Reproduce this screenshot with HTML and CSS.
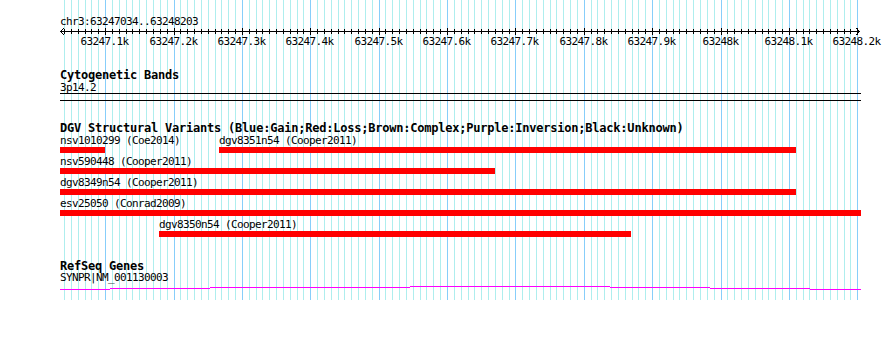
FILE: index.html
```html
<!DOCTYPE html>
<html lang="en">
<head>
    <meta charset="UTF-8">
    <meta name="viewport" content="width=device-width, initial-scale=1.0">
    <title>chr3:63247034..63248203</title>
    <link rel="stylesheet" href="styles.css">
</head>
<body>
    <div class="panel">
        <!-- grid: one line every 10 bp, darker every 100 bp -->
        <svg class="grid" width="890" height="300">
            <defs>
                <path id="bp10" d="M64.5 0V300M71.5 0V300M78.5 0V300M85.5 0V300M91.5 0V300M98.5 0V300M105.5 0V300M112.5 0V300M119.5 0V300M126.5 0V300M132.5 0V300M139.5 0V300M146.5 0V300M153.5 0V300M160.5 0V300M167.5 0V300M174.5 0V300M180.5 0V300M187.5 0V300M194.5 0V300M201.5 0V300M208.5 0V300M215.5 0V300M221.5 0V300M228.5 0V300M235.5 0V300M242.5 0V300M249.5 0V300M256.5 0V300M262.5 0V300M269.5 0V300M276.5 0V300M283.5 0V300M290.5 0V300M297.5 0V300M303.5 0V300M310.5 0V300M317.5 0V300M324.5 0V300M331.5 0V300M338.5 0V300M344.5 0V300M351.5 0V300M358.5 0V300M365.5 0V300M372.5 0V300M379.5 0V300M385.5 0V300M392.5 0V300M399.5 0V300M406.5 0V300M413.5 0V300M420.5 0V300M426.5 0V300M433.5 0V300M440.5 0V300M447.5 0V300M454.5 0V300M461.5 0V300M468.5 0V300M474.5 0V300M481.5 0V300M488.5 0V300M495.5 0V300M502.5 0V300M509.5 0V300M515.5 0V300M522.5 0V300M529.5 0V300M536.5 0V300M543.5 0V300M550.5 0V300M556.5 0V300M563.5 0V300M570.5 0V300M577.5 0V300M584.5 0V300M591.5 0V300M597.5 0V300M604.5 0V300M611.5 0V300M618.5 0V300M625.5 0V300M632.5 0V300M638.5 0V300M645.5 0V300M652.5 0V300M659.5 0V300M666.5 0V300M673.5 0V300M679.5 0V300M686.5 0V300M693.5 0V300M700.5 0V300M707.5 0V300M714.5 0V300M721.5 0V300M727.5 0V300M734.5 0V300M741.5 0V300M748.5 0V300M755.5 0V300M762.5 0V300M768.5 0V300M775.5 0V300M782.5 0V300M789.5 0V300M796.5 0V300M803.5 0V300M809.5 0V300M816.5 0V300M823.5 0V300M830.5 0V300M837.5 0V300M844.5 0V300M850.5 0V300M857.5 0V300"/>
                <path id="bp100" d="M105.5 0V300M174.5 0V300M242.5 0V300M310.5 0V300M379.5 0V300M447.5 0V300M515.5 0V300M584.5 0V300M652.5 0V300M721.5 0V300M789.5 0V300M857.5 0V300"/>
            </defs>
            <use href="#bp10" class="grid-minor"/>
            <use href="#bp100" class="grid-major"/>
        </svg>

        <div class="content">
            <svg class="ruler" width="890" height="50">
                <defs>
                    <clipPath id="minor-ticks"><rect x="0" y="29" width="890" height="5"/></clipPath>
                    <clipPath id="major-ticks"><rect x="0" y="28" width="890" height="7"/></clipPath>
                </defs>
                <text class="segment" x="60" y="25">chr3:63247034..63248203</text>
                <path class="axis" d="M60 31.5H860"/>
                <path class="arrow" d="M64 28L60.5 31.5L64 35M856 28L859.5 31.5L856 35"/>
                <use href="#bp10" class="tick" clip-path="url(#minor-ticks)"/>
                <use href="#bp100" class="tick" clip-path="url(#major-ticks)"/>
                <text class="tick-label" x="104.5" y="45">63247.1k</text>
                <text class="tick-label" x="173.5" y="45">63247.2k</text>
                <text class="tick-label" x="241.5" y="45">63247.3k</text>
                <text class="tick-label" x="309.5" y="45">63247.4k</text>
                <text class="tick-label" x="378.5" y="45">63247.5k</text>
                <text class="tick-label" x="446.5" y="45">63247.6k</text>
                <text class="tick-label" x="514.5" y="45">63247.7k</text>
                <text class="tick-label" x="583.5" y="45">63247.8k</text>
                <text class="tick-label" x="651.5" y="45">63247.9k</text>
                <text class="tick-label" x="720.5" y="45">63248k</text>
                <text class="tick-label" x="788.5" y="45">63248.1k</text>
                <text class="tick-label" x="856.5" y="45">63248.2k</text>
            </svg>

            <div class="tracks">
                <section class="track cyto">
                    <h2 class="track-title">Cytogenetic Bands</h2>
                    <div class="feature-name">3p14.2</div>
                    <div class="band"></div>
                </section>

                <section class="track dgv">
                    <h2 class="track-title">DGV Structural Variants (Blue:Gain;Red:Loss;Brown:Complex;Purple:Inversion;Black:Unknown)</h2>
                    <div class="rows">
                        <div class="row">
                            <div class="feature" style="left: 0px; width: 45px;">
                                <div class="feature-name">nsv1010299 (Coe2014)</div>
                                <div class="bar"></div>
                            </div>
                            <div class="feature" style="left: 159px; width: 577px;">
                                <div class="feature-name">dgv8351n54 (Cooper2011)</div>
                                <div class="bar"></div>
                            </div>
                        </div>
                        <div class="row">
                            <div class="feature" style="left: 0px; width: 435px;">
                                <div class="feature-name">nsv590448 (Cooper2011)</div>
                                <div class="bar"></div>
                            </div>
                        </div>
                        <div class="row">
                            <div class="feature" style="left: 0px; width: 736px;">
                                <div class="feature-name">dgv8349n54 (Cooper2011)</div>
                                <div class="bar"></div>
                            </div>
                        </div>
                        <div class="row">
                            <div class="feature" style="left: 0px; width: 801px;">
                                <div class="feature-name">esv25050 (Conrad2009)</div>
                                <div class="bar"></div>
                            </div>
                        </div>
                        <div class="row">
                            <div class="feature" style="left: 99px; width: 472px;">
                                <div class="feature-name">dgv8350n54 (Cooper2011)</div>
                                <div class="bar"></div>
                            </div>
                        </div>
                    </div>
                </section>

                <section class="track refseq">
                    <h2 class="track-title">RefSeq Genes</h2>
                    <div class="feature-name">SYNPR|NM_001130003</div>
                    <svg class="gene" width="801" height="7">
                        <rect x="0" y="5" width="50" height="1"/>
                        <rect x="50" y="4" width="100" height="1"/>
                        <rect x="150" y="3" width="200" height="1"/>
                        <rect x="350" y="2" width="200" height="1"/>
                        <rect x="550" y="3" width="100" height="1"/>
                        <rect x="650" y="4" width="100" height="1"/>
                        <rect x="750" y="5" width="51" height="1"/>
                    </svg>
                </section>
            </div>
        </div>
    </div>
</body>
</html>
```

FILE: styles.css
```css
body {
    margin: 0;
    background: #ffffff;
    color: #000000;
    font-family: "DejaVu Sans Mono", "Liberation Mono", monospace;
}

.panel {
    position: relative;
    width: 890px;
    height: 344px;
}

/* background grid, drawn under everything */
.grid {
    position: absolute;
    top: 0;
    left: 0;
}

.grid-minor {
    stroke: #aeeeee;
    stroke-width: 1;
}

.grid-major {
    stroke: #87cefa;
    stroke-width: 1;
}

.content {
    position: relative;
}

/* ruler */
.ruler {
    display: block;
}

.segment,
.tick-label {
    font-size: 11px;
    letter-spacing: -0.62px;
    fill: #000000;
}

.tick-label {
    text-anchor: middle;
}

.axis,
.tick {
    stroke: #000000;
    stroke-width: 1;
    shape-rendering: crispEdges;
}

.arrow {
    fill: none;
    stroke: #000000;
    stroke-width: 1;
}

/* tracks */
.tracks {
    margin-left: 60px;
    width: 801px;
}

.track-title {
    margin: 0;
    font-size: 12px;
    line-height: 12px;
    font-weight: bold;
    letter-spacing: -0.22px;
    white-space: nowrap;
}

.feature-name {
    font-size: 11px;
    line-height: 11px;
    letter-spacing: -0.62px;
    white-space: nowrap;
}

.cyto .track-title {
    margin-top: 19px;
}

.cyto .feature-name {
    margin-top: 1px;
}

.band {
    height: 8px;
    box-sizing: border-box;
    border-top: 1px solid #000000;
    border-bottom: 1px solid #000000;
}

.dgv .track-title {
    margin-top: 21px;
}

.rows {
    display: flex;
    flex-direction: column;
    gap: 3px;
    margin-top: 1px;
}

.row {
    position: relative;
    height: 18px;
}

.feature {
    position: absolute;
    top: 0;
}

.bar {
    height: 6px;
    margin-top: 1px;
    background: #ff0000;
}

.refseq .track-title {
    margin-top: 23px;
}

.gene {
    display: block;
    margin-top: 1px;
    fill: #ff00ff;
    shape-rendering: crispEdges;
}
```
